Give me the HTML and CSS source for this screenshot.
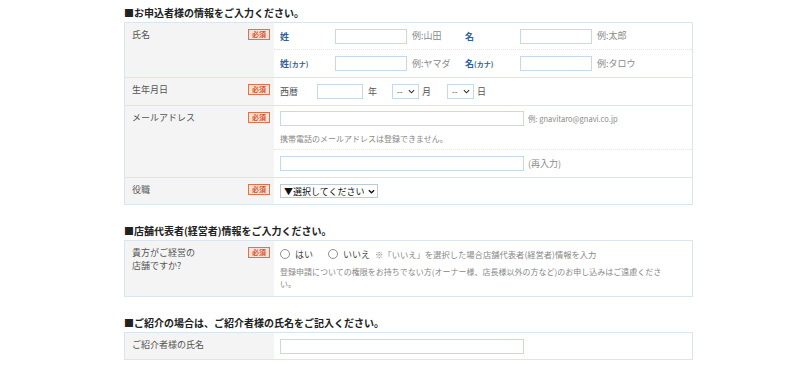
FILE: index.html
```html
<!DOCTYPE html>
<html lang="ja">
<head>
<meta charset="utf-8">
<title>お申込フォーム</title>
<link rel="stylesheet" href="styles.css">
</head>
<body>
<div class="page">
  <h2 class="head">■お申込者様の情報をご入力ください。</h2>
  <table class="form">
    <tr>
      <th><div class="th-in"><span class="lbl">氏名</span><span class="req">必須</span></div></th>
      <td>
        <div class="sub h26 dotted">
          <span class="nlbl">姓</span><input class="inp w72" type="text"><span class="ex ex-n">例:山田</span>
          <span class="nlbl">名</span><input class="inp w72" type="text"><span class="ex">例:太郎</span>
        </div>
        <div class="sub h27">
          <span class="nlbl">姓<small>(カナ)</small></span><input class="inp w72" type="text"><span class="ex ex-n">例:ヤマダ</span>
          <span class="nlbl">名<small>(カナ)</small></span><input class="inp w72" type="text"><span class="ex">例:タロウ</span>
        </div>
      </td>
    </tr>
    <tr>
      <th><div class="th-in"><span class="lbl">生年月日</span><span class="req">必須</span></div></th>
      <td>
        <div class="sub h27">
          <span class="txt era">西暦</span><input class="inp w46" type="text"><span class="txt unit-y">年</span>
          <span class="sel sel-s">--<svg class="chev" viewBox="0 0 8 5" width="7" height="5"><path d="M1 1l3 3 3-3" fill="none" stroke="#333" stroke-width="1.3"/></svg></span><span class="txt unit-m">月</span>
          <span class="sel sel-s">--<svg class="chev" viewBox="0 0 8 5" width="7" height="5"><path d="M1 1l3 3 3-3" fill="none" stroke="#333" stroke-width="1.3"/></svg></span><span class="txt unit-d">日</span>
        </div>
      </td>
    </tr>
    <tr>
      <th><div class="th-in"><span class="lbl">メールアドレス</span><span class="req">必須</span></div></th>
      <td>
        <div class="sub-mail dotted">
          <div class="line"><input class="inp w244" type="text"><span class="ex ex-mail">例: gnavitaro@gnavi.co.jp</span></div>
          <p class="note">携帯電話のメールアドレスは登録できません。</p>
        </div>
        <div class="sub h27">
          <input class="inp w244" type="text"><span class="ex ex-re">(再入力)</span>
        </div>
      </td>
    </tr>
    <tr>
      <th><div class="th-in"><span class="lbl">役職</span><span class="req">必須</span></div></th>
      <td>
        <div class="sub h26">
          <span class="sel sel-l">▼選択してください<svg class="chev" viewBox="0 0 8 5" width="7" height="5"><path d="M1 1l3 3 3-3" fill="none" stroke="#111" stroke-width="1.5"/></svg></span>
        </div>
      </td>
    </tr>
  </table>

  <h2 class="head">■店舗代表者(経営者)情報をご入力ください。</h2>
  <table class="form">
    <tr>
      <th><div class="th-in th-tall"><span class="lbl">貴方がご経営の<br>店舗ですか?</span><span class="req">必須</span></div></th>
      <td class="owner">
        <div class="radios">
          <span class="radio"></span><span class="rlbl">はい</span>
          <span class="radio"></span><span class="rlbl">いいえ</span>
          <span class="rnote">※「いいえ」を選択した場合店舗代表者(経営者)情報を入力</span>
        </div>
        <p class="note note2">登録申請についての権限をお持ちでない方(オーナー様、店長様以外の方など)のお申し込みはご遠慮ください。</p>
      </td>
    </tr>
  </table>

  <h2 class="head">■ご紹介の場合は、ご紹介者様の氏名をご記入ください。</h2>
  <table class="form">
    <tr>
      <th><div class="th-in"><span class="lbl">ご紹介者様の氏名</span></div></th>
      <td>
        <div class="sub h26">
          <input class="inp w244" type="text">
        </div>
      </td>
    </tr>
  </table>
</div>
</body>
</html>
```

FILE: styles.css
```css
html, body {
  margin: 0;
  padding: 0;
  background: #ffffff;
}
body {
  font-family: "Noto Sans CJK JP", "Noto Sans", sans-serif;
  color: #555555;
  font-size: 9px;
}
.page {
  width: 569px;
  margin-left: 124px;
  padding-top: 6px;
}
.head {
  margin: 0 0 2px 0;
  font-size: 10px;
  line-height: 14px;
  font-weight: bold;
  color: #222222;
}
.form {
  width: 569px;
  border-collapse: collapse;
  border: 1px solid #dce4ee;
  margin-bottom: 19px;
  table-layout: fixed;
}
.form tr {
  border-bottom: 1px solid #dce4ee;
}
.form th {
  width: 149px;
  background: #f4f4f4;
  vertical-align: top;
  text-align: left;
  font-weight: normal;
  padding: 0;
}
.form td {
  vertical-align: top;
  padding: 0 0 0 6px;
  background: #ffffff;
}
.form td.owner {
  padding-top: 6px;
  padding-bottom: 6px;
}
.th-in {
  display: flex;
  justify-content: space-between;
  align-items: flex-start;
  padding: 5px 4px 0 7px;
}
.th-tall {
  padding-top: 5px;
}
.lbl {
  font-size: 9px;
  line-height: 13px;
  color: #555555;
}
.req {
  display: inline-block;
  margin-top: 1px;
  width: 20px;
  height: 9px;
  border: 1px solid #e2704c;
  background: #fbe2d7;
  color: #d8532c;
  font-size: 7px;
  line-height: 9px;
  text-align: center;
  font-weight: bold;
}
.sub {
  display: flex;
  align-items: center;
}
.h26 { height: 26px; }
.h27 { height: 27px; }
.dotted {
  border-bottom: 1px dotted #e3e3e3;
  margin-left: -6px;
  padding-left: 6px;
}
.inp {
  box-sizing: border-box;
  height: 15px;
  border: 1px solid #c6d8ec;
  background: #ffffff;
  padding: 0;
  margin: 0;
  outline: none;
}
.w72 { width: 72px; }
.w46 { width: 46px; }
.w244 { width: 244px; }
.nlbl {
  width: 55px;
  color: #2f5f9f;
  font-weight: bold;
  font-size: 9px;
  line-height: 13px;
}
.nlbl small {
  font-size: 7px;
}
.ex {
  color: #8a8a8a;
  font-size: 9px;
  line-height: 12px;
  margin-left: 5px;
}
.ex-n {
  width: 53px;
}
.ex-mail {
  font-size: 7.5px;
  margin-left: 4px;
}
.ex-re {
  margin-left: 4px;
}
.txt {
  color: #555555;
  font-size: 9px;
  line-height: 13px;
}
.era { width: 37px; }
.unit-y { margin-left: 5px; width: 24px; }
.unit-m { margin-left: 3px; width: 25px; }
.unit-d { margin-left: 3px; }
.sel {
  box-sizing: border-box;
  display: inline-flex;
  align-items: center;
  justify-content: space-between;
  height: 15px;
  border: 1px solid #c6d8ec;
  background: #ffffff;
  font-size: 8px;
  color: #444444;
  padding: 0 3px 0 4px;
}
.sel-s { width: 27px; }
.sel-l {
  width: 98px;
  height: 14px;
  color: #111111;
  font-size: 9px;
  padding: 0 2px 0 3px;
  border-color: #c0cad6;
}
.chev { display: block; }
.sub-mail {
  height: 44px;
  padding-top: 5px;
  box-sizing: border-box;
}
.line {
  display: flex;
  align-items: center;
}
.note {
  margin: 7px 0 0 0;
  font-size: 8px;
  line-height: 12px;
  color: #888888;
}
.radios {
  display: flex;
  align-items: center;
  height: 14px;
}
.radio {
  box-sizing: border-box;
  width: 10px;
  height: 10px;
  border: 1px solid #8d8d8d;
  border-radius: 50%;
  background: #ffffff;
}
.rlbl {
  margin-left: 5px;
  margin-right: 9px;
  font-size: 9px;
  color: #444444;
}
.rlbl + .radio {
  margin-left: 6px;
}
.rnote {
  margin-left: -4px;
  font-size: 8.3px;
  color: #888888;
}
.note2 {
  margin-top: 5px;
  width: 396px;
}
```
